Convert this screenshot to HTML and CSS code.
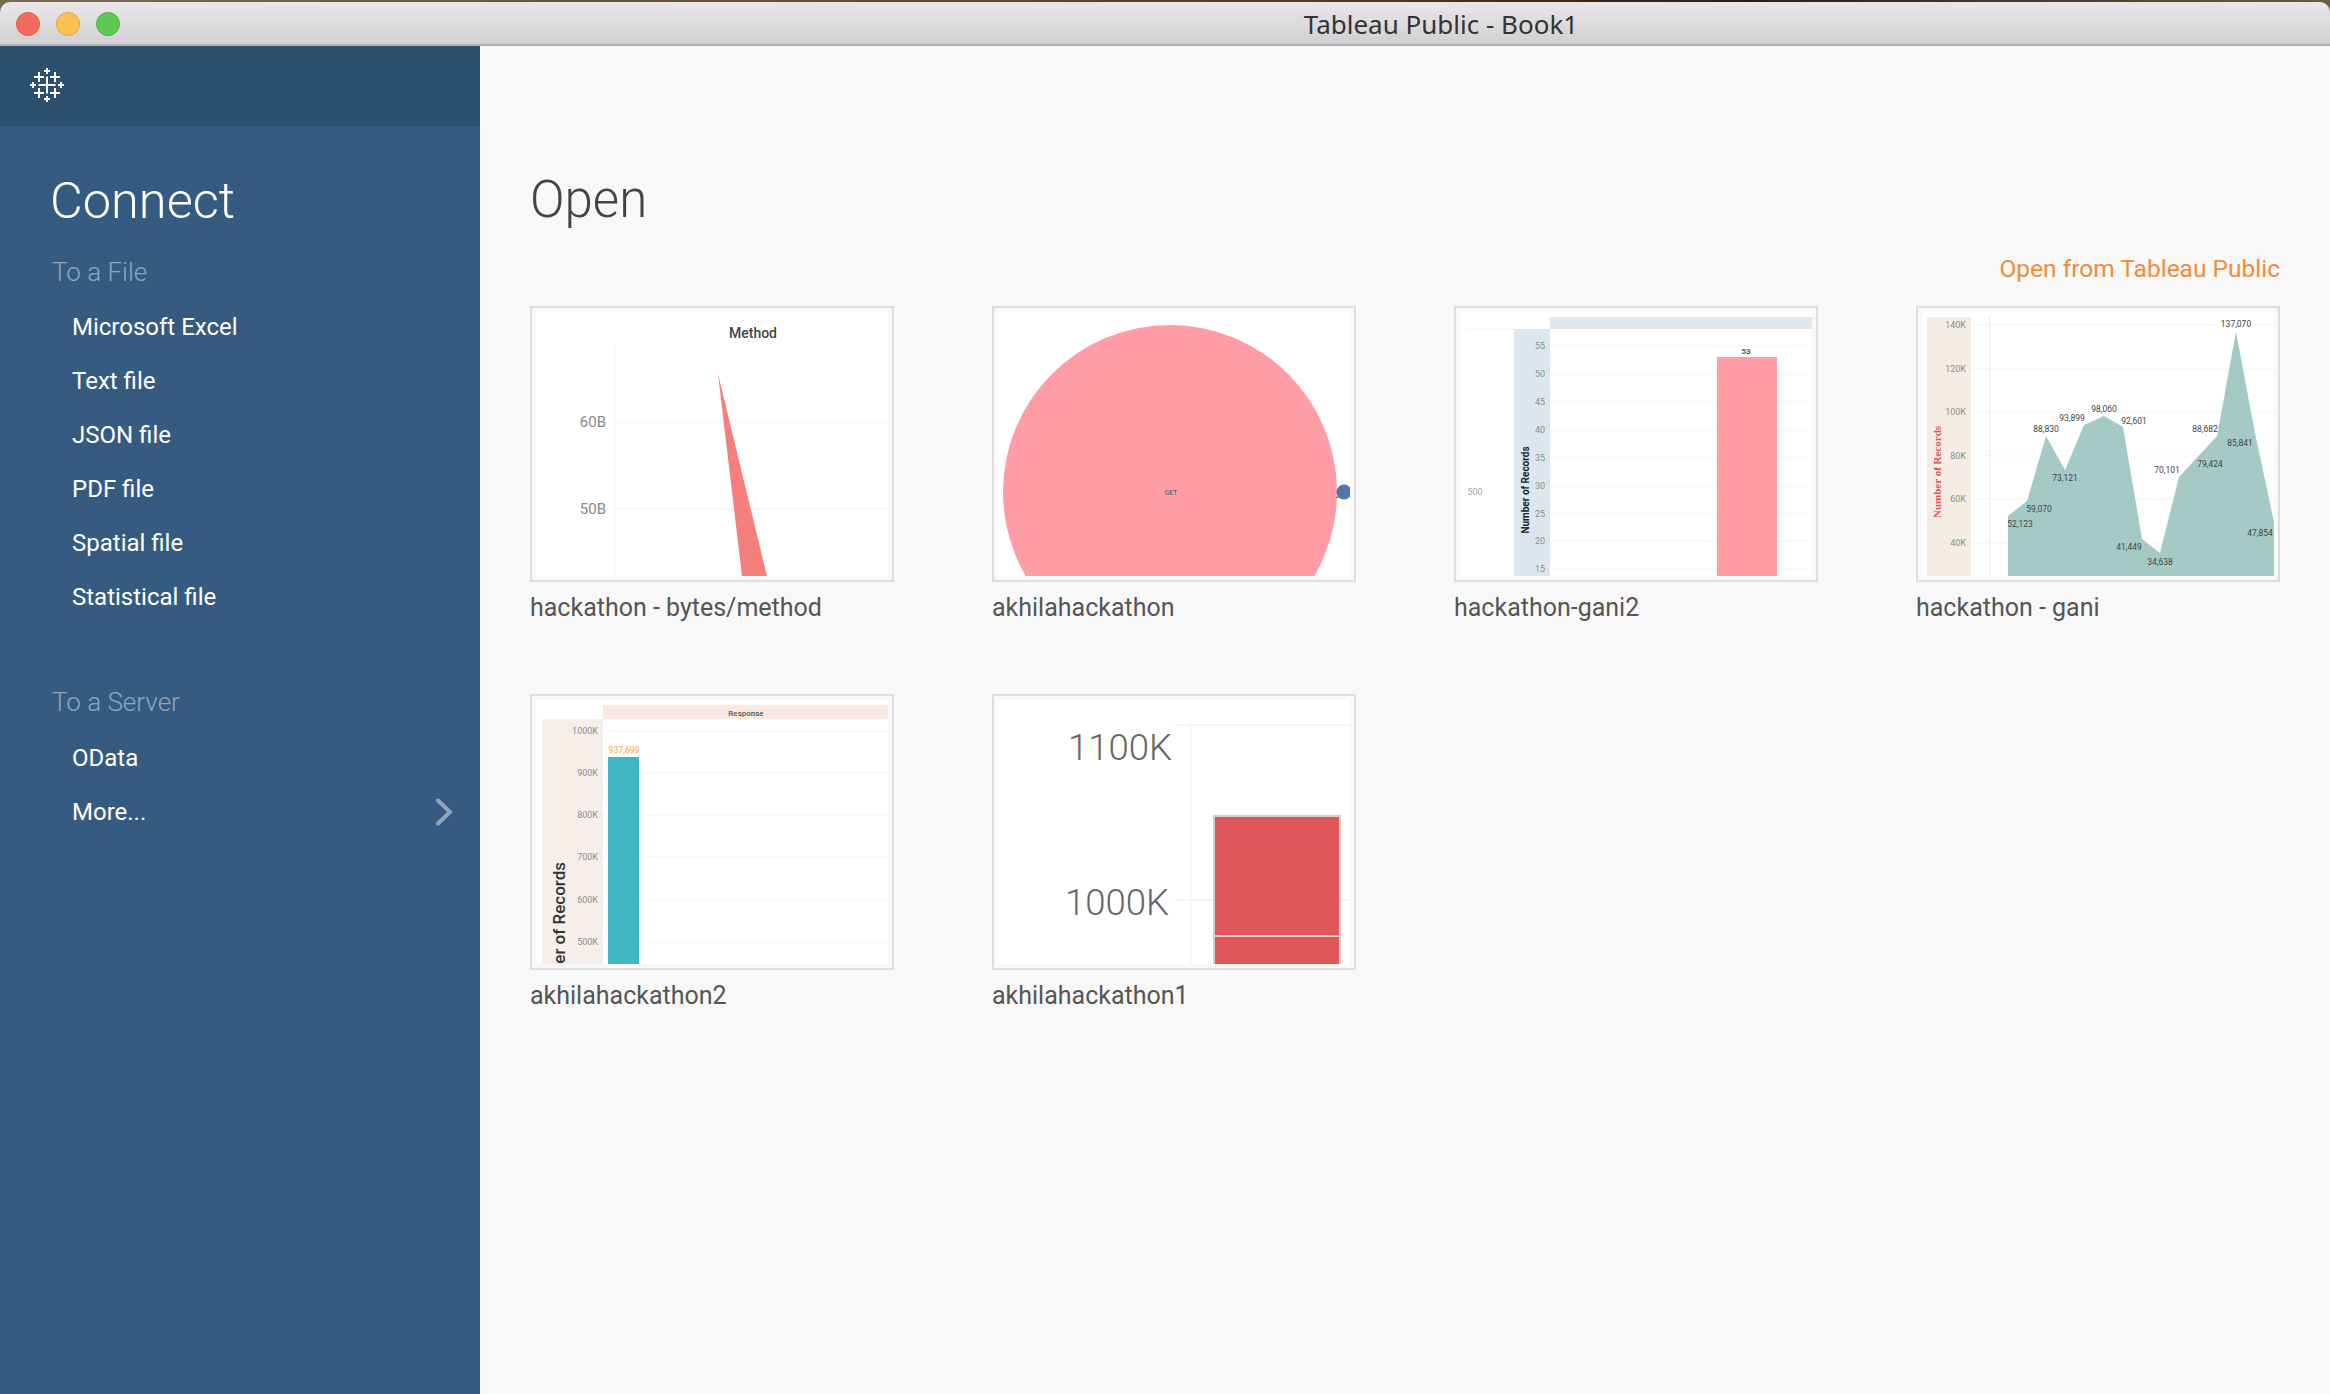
FILE: index.html
```html
<!doctype html>
<html lang="en">

<head>
    <title>Tableau Public - Book1</title>
    <link rel="stylesheet" href="styles.css">
</head>

<body>
    <div class="desktop">
        <div class="titlebar">
            <div class="lights">
                <span class="light red"></span>
                <span class="light yellow"></span>
                <span class="light green"></span>
            </div>
            <div class="window-title">Tableau Public - Book1</div>
        </div>

        <div class="app">
            <div class="sidebar">
                <div class="logo-bar">
                    <svg class="logo" width="36" height="36" viewBox="0 0 36 36">
                        <path d="M18 9.500V26.500M9.500 18H26.500" />
                        <path d="M10 5V15M5 10H15M26 5V15M21 10H31M10 21V31M5 26H15M26 21V31M21 26H31" />
                        <path d="M18 1V7M15 4H21M18 29V35M15 32H21M4 15V21M1 18H7M32 15V21M29 18H35" />
                    </svg>
                </div>
                <div class="connect">
                    <h1 class="connect-title">Connect</h1>
                    <div class="side-heading">To a File</div>
                    <a class="side-link">Microsoft Excel</a>
                    <a class="side-link">Text file</a>
                    <a class="side-link">JSON file</a>
                    <a class="side-link">PDF file</a>
                    <a class="side-link">Spatial file</a>
                    <a class="side-link">Statistical file</a>
                    <div class="side-heading server">To a Server</div>
                    <a class="side-link">OData</a>
                    <a class="side-link more">More...
                        <svg class="chevron" width="18" height="28" viewBox="0 0 18 28">
                            <path d="M3 2.500L15 14L3 25.500" />
                        </svg>
                    </a>
                </div>
            </div>

            <div class="main">
                <h1 class="open-title">Open</h1>
                <div class="open-link">Open from Tableau Public</div>

                <div class="grid">
                    <div class="card">
                        <div class="thumb">
                            <svg class="chart" width="352" height="264" viewBox="0 0 352 264">
                                <path class="grid-line" d="M79 32V264M73 110H352M73 197H352" />
                                <text class="method" x="217" y="26" text-anchor="middle">Method</text>
                                <text class="axis-b" x="70" y="115" text-anchor="end">60B</text>
                                <text class="axis-b" x="70" y="202" text-anchor="end">50B</text>
                                <polygon points="182,62 231,264 206,264" fill="#f47f7d" />
                            </svg>
                        </div>
                        <div class="card-name">hackathon - bytes/method</div>
                    </div>

                    <div class="card">
                        <div class="thumb">
                            <svg class="chart" width="352" height="264" viewBox="0 0 352 264">
                                <circle cx="172" cy="180" r="167" fill="#ff9ca6" />
                                <path d="M338 186L342 184" stroke="#59a14f" stroke-width="1.500" />
                                <circle cx="346" cy="180" r="7.500" fill="#4e79a7" />
                                <text class="tiny" x="173" y="182.500" text-anchor="middle">GET</text>
                            </svg>
                        </div>
                        <div class="card-name">akhilahackathon</div>
                    </div>

                    <div class="card">
                        <div class="thumb">
                            <svg class="chart" width="352" height="264" viewBox="0 0 352 264">
                                <rect x="90" y="5" width="262" height="12" fill="#dfe9ee" />
                                <rect x="54" y="17" width="36" height="247" fill="#dce7ed" />
                                <path class="grid-line" d="M5 17H54M90 34H352M90 62H352M90 90H352M90 118H352M90 146H352M90 174H352M90 202H352M90 229H352M90 257H352" />
                                <g class="axis-s" text-anchor="end">
                                    <text x="85" y="37">55</text>
                                    <text x="85" y="65">50</text>
                                    <text x="85" y="93">45</text>
                                    <text x="85" y="121">40</text>
                                    <text x="85" y="149">35</text>
                                    <text x="85" y="177">30</text>
                                    <text x="85" y="205">25</text>
                                    <text x="85" y="232">20</text>
                                    <text x="85" y="260">15</text>
                                </g>
                                <text class="axis-title" transform="translate(69 178) rotate(-90)" text-anchor="middle">Number of Records</text>
                                <text class="axis-s light-num" x="15" y="183" text-anchor="middle">500</text>
                                <rect x="257" y="45" width="60" height="219" fill="#ff9ca6" />
                                <text class="bar-num" x="286" y="42" text-anchor="middle">53</text>
                            </svg>
                        </div>
                        <div class="card-name">hackathon-gani2</div>
                    </div>

                    <div class="card">
                        <div class="thumb">
                            <svg class="chart" width="352" height="264" viewBox="0 0 352 264">
                                <rect x="5" y="5" width="44" height="259" fill="#f5ede3" />
                                <path class="grid-line" d="M49 13H352M49 57H352M49 100H352M49 144H352M49 187H352M49 231H352" />
                                <path class="dots" d="M67.500 5V264" />
                                <polygon points="86,204 105,189 124,124 143,158 162,113 182,104 201,115 220,227 238,241 257,165 295,124 314,20 333,121 352,210 352,264 86,264" fill="#a5cac6" />
                                <g class="axis-s" text-anchor="end">
                                    <text x="44" y="16">140K</text>
                                    <text x="44" y="60">120K</text>
                                    <text x="44" y="103">100K</text>
                                    <text x="44" y="147">80K</text>
                                    <text x="44" y="190">60K</text>
                                    <text x="44" y="234">40K</text>
                                </g>
                                <text class="serif-title" transform="translate(19 160) rotate(-90)" text-anchor="middle">Number of Records</text>
                                <g class="point-num" text-anchor="middle">
                                    <text x="314" y="15">137,070</text>
                                    <text x="182" y="100">98,060</text>
                                    <text x="150" y="109">93,899</text>
                                    <text x="212" y="112">92,601</text>
                                    <text x="124" y="120">88,830</text>
                                    <text x="283" y="120">88,682</text>
                                    <text x="318" y="134">85,841</text>
                                    <text x="288" y="155">79,424</text>
                                    <text x="143" y="169">73,121</text>
                                    <text x="245" y="161">70,101</text>
                                    <text x="117" y="200">59,070</text>
                                    <text x="98" y="215">52,123</text>
                                    <text x="338" y="224">47,854</text>
                                    <text x="207" y="238">41,449</text>
                                    <text x="238" y="253">34,638</text>
                                </g>
                            </svg>
                        </div>
                        <div class="card-name">hackathon - gani</div>
                    </div>

                    <div class="card">
                        <div class="thumb">
                            <svg class="chart" width="352" height="264" viewBox="0 0 352 264">
                                <rect x="67" y="5" width="285" height="14" fill="#f9e9e0" />
                                <rect x="6" y="19" width="61" height="245" fill="#f8eee9" />
                                <path class="grid-line" d="M67 31H352M67 73H352M67 115H352M67 157H352M67 200H352M67 242H352" />
                                <text class="response" x="210" y="16" text-anchor="middle">Response</text>
                                <g class="axis-s" text-anchor="end">
                                    <text x="62" y="34">1000K</text>
                                    <text x="62" y="76">900K</text>
                                    <text x="62" y="118">800K</text>
                                    <text x="62" y="160">700K</text>
                                    <text x="62" y="203">600K</text>
                                    <text x="62" y="245">500K</text>
                                </g>
                                <text class="records-big" transform="translate(29 162) rotate(-90)" text-anchor="end">er of Records</text>
                                <rect x="72" y="57" width="31" height="207" fill="#40b7c4" />
                                <text class="orange-num" x="88" y="53" text-anchor="middle">937,699</text>
                            </svg>
                        </div>
                        <div class="card-name">akhilahackathon2</div>
                    </div>

                    <div class="card">
                        <div class="thumb">
                            <svg class="chart" width="352" height="264" viewBox="0 0 352 264">
                                <path class="grid-line wide" d="M177 25H352M177 200H352M192.500 23V264" />
                                <text class="axis-big" x="174" y="60" text-anchor="end">1100K</text>
                                <text class="axis-big" x="171" y="215" text-anchor="end">1000K</text>
                                <rect x="215" y="115" width="128" height="149" fill="#d0d0d0" />
                                <rect x="217" y="117" width="124" height="118" fill="#e15759" />
                                <rect x="217" y="237" width="124" height="27" fill="#e15759" />
                            </svg>
                        </div>
                        <div class="card-name">akhilahackathon1</div>
                    </div>
                </div>
            </div>
        </div>
    </div>
</body>

</html>
```

FILE: styles.css
```css
html,
body {
    margin: 0;
    padding: 0;
}

body {
    width: 2330px;
    height: 1394px;
    overflow: hidden;
    font-family: Roboto, "Liberation Sans", sans-serif;
    background: linear-gradient(to right, #7a6a4e, #6b5a40 20%, #5a3a26 55%, #2e1c12 75%, #6a5a48);
}

.desktop {
    display: flex;
    flex-direction: column;
    height: 1394px;
    padding-top: 2px;
    box-sizing: border-box;
}

.titlebar {
    display: flex;
    align-items: center;
    flex: none;
    height: 44px;
    padding-top: 2px;
    box-sizing: border-box;
    border-bottom: 2px solid #b4b2b4;
    border-radius: 10px 10px 0 0;
    background: linear-gradient(to bottom, #e9e7e9, #d1cfd1);
}

.lights {
    display: flex;
    flex: none;
    gap: 16px;
    padding-left: 16px;
}

.light {
    width: 24px;
    height: 24px;
    box-sizing: border-box;
    border-radius: 50%;
    border: 1px solid;
}

.red {
    background-color: #f3695e;
    border-color: #dd5a50;
}

.yellow {
    background-color: #fac14e;
    border-color: #dfa53b;
}

.green {
    background-color: #5fc853;
    border-color: #4cae42;
}

.window-title {
    flex: 1;
    padding-left: 432px;
    margin-top: -1px;
    text-align: center;
    font-family: "Noto Sans", sans-serif;
    font-size: 26px;
    line-height: 34px;
    color: #333;
}

.app {
    display: flex;
    flex: 1;
}

.sidebar {
    flex: none;
    width: 480px;
    background-color: #365b81;
}

.logo-bar {
    display: flex;
    align-items: center;
    height: 80px;
    padding-left: 29px;
    padding-bottom: 2px;
    box-sizing: border-box;
    background-color: #2d4f6e;
}

.logo path {
    fill: none;
    stroke: white;
    stroke-width: 2;
}

.connect {
    display: flex;
    flex-direction: column;
    padding: 40px 0 0 50px;
}

.connect-title {
    margin: 0 0 16px;
    font-size: 50.500px;
    font-weight: 300;
    line-height: 70px;
    color: white;
}

.side-heading {
    margin-bottom: 8px;
    margin-left: 2px;
    font-size: 26px;
    font-weight: 300;
    line-height: 40px;
    color: #8fa5bb;
}

.server {
    margin-top: 58px;
    margin-bottom: 9px;
}

.side-link {
    display: flex;
    align-items: center;
    justify-content: space-between;
    height: 54px;
    padding-left: 22px;
    padding-right: 27px;
    font-size: 24px;
    color: white;
}

.chevron path {
    fill: none;
    stroke: #8fa5bb;
    stroke-width: 4;
    stroke-linecap: round;
    stroke-linejoin: round;
}

.main {
    flex: 1;
    padding: 119px 50px 0;
    background-color: #f8f8f8;
}

.open-title {
    margin: 0;
    font-size: 51px;
    font-weight: 300;
    line-height: 70px;
    color: #444;
}

.open-link {
    margin-top: 16px;
    text-align: right;
    font-size: 24.500px;
    line-height: 36px;
    color: #f18b3a;
}

.grid {
    display: grid;
    grid-template-columns: repeat(4, 364px);
    column-gap: 98px;
    margin-top: 19px;
}

.card {
    height: 388px;
}

.thumb {
    width: 364px;
    height: 276px;
    box-sizing: border-box;
    padding: 4px;
    border: 2px solid #ddd;
}

.chart {
    display: block;
    background-color: white;
}

.card-name {
    margin-top: 8px;
    font-size: 25px;
    line-height: 36px;
    color: #555;
}

.grid-line {
    fill: none;
    stroke: #f5f5f5;
    stroke-width: 1;
}

.wide {
    stroke-width: 2;
}

.dots {
    fill: none;
    stroke: #ddd;
    stroke-dasharray: 1 1;
}

.chart text {
    font-family: Roboto, "Liberation Sans", sans-serif;
}

.method {
    font-size: 14px;
    font-weight: 500;
    fill: #444;
}

.axis-b {
    font-size: 15px;
    fill: #888;
}

.tiny {
    font-size: 7px;
    fill: #555;
}

.axis-s {
    font-size: 9px;
    fill: #8c8c8c;
}

.light-num {
    fill: #a5a5a5;
}

.axis-title {
    font-size: 10px;
    font-weight: 700;
    fill: #222;
}

.bar-num {
    font-size: 8px;
    font-weight: 700;
    fill: #555;
}

.chart .serif-title {
    font-family: "Liberation Serif", serif;
    font-size: 11px;
    font-weight: 700;
    fill: #e15759;
}

.point-num {
    font-size: 8.500px;
    fill: #444;
}

.response {
    font-size: 8px;
    font-weight: 500;
    fill: #555;
}

.records-big {
    font-size: 17px;
    font-weight: 500;
    fill: #333;
}

.orange-num {
    font-size: 8.500px;
    font-weight: 500;
    fill: #f9b36e;
}

.axis-big {
    font-size: 36.500px;
    font-weight: 300;
    fill: #666;
}
```
